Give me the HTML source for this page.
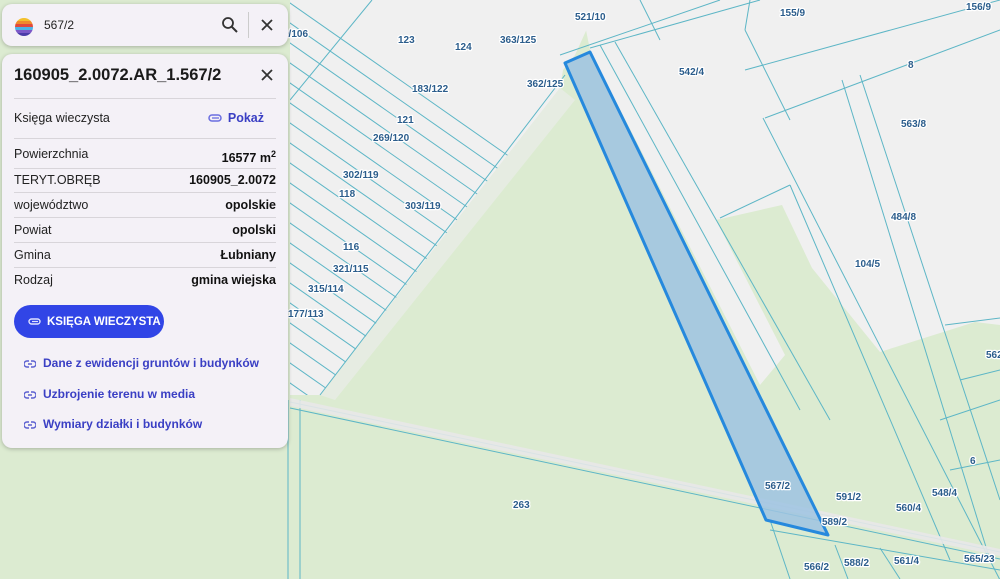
<!DOCTYPE html>
<html><head><meta charset="utf-8"><style>
*{margin:0;padding:0;box-sizing:border-box}
body{width:1000px;height:579px;overflow:hidden;position:relative;font-family:"Liberation Sans",sans-serif;background:#dcebd1}
svg.map{position:absolute;left:0;top:0}
.lbl{font:bold 10px "Liberation Sans",sans-serif;fill:#2b5d8c;paint-order:stroke;stroke:#fff;stroke-width:2.5px;stroke-linejoin:round}
.card{position:absolute;left:2px;background:#f4f1f7;border-radius:10px;box-shadow:0 1px 4px rgba(0,0,0,.25)}
.row{position:absolute;left:12px;width:262px;font-size:12.5px;color:#222;border-bottom:1px solid #d8d5da;height:25px;line-height:25px}
.row b{position:absolute;right:0;top:0;color:#111}
.lnk{position:absolute;left:22px;font-size:12px;font-weight:bold;color:#3a3fc4;white-space:nowrap}
.lnk svg{vertical-align:-1px;margin-right:7px}
</style></head><body>
<svg class="map" width="1000" height="579" viewBox="0 0 1000 579">
<defs>
<clipPath id="lg"><polygon points="290,0 600,0 575,55 563,70 560,88 320,395 290,395"/></clipPath>
</defs>
<polygon points="290,0 600,0 575,55 563,70 560,88 320,395 290,395" fill="#f0f0f0"/>
<polygon points="580,0 1000,0 1000,325 975,322 880,352 812,268 782,205 716,220 785,355 760,385 590,50" fill="#f0f0f0"/>
<polygon points="320,395 560,88 575,100 335,400" fill="#e6ece2"/>
<g clip-path="url(#lg)" stroke="#5db6c6" stroke-width="1" fill="none">
<line x1="200" y1="-60" x2="800" y2="360"/><line x1="200" y1="-40" x2="800" y2="380"/><line x1="200" y1="-20" x2="800" y2="400"/><line x1="200" y1="0" x2="800" y2="420"/><line x1="200" y1="20" x2="800" y2="440"/><line x1="200" y1="40" x2="800" y2="460"/><line x1="200" y1="60" x2="800" y2="480"/><line x1="200" y1="80" x2="800" y2="500"/><line x1="200" y1="100" x2="800" y2="520"/><line x1="200" y1="120" x2="800" y2="540"/><line x1="200" y1="140" x2="800" y2="560"/><line x1="200" y1="160" x2="800" y2="580"/><line x1="200" y1="180" x2="800" y2="600"/><line x1="200" y1="200" x2="800" y2="620"/><line x1="200" y1="220" x2="800" y2="640"/><line x1="200" y1="240" x2="800" y2="660"/><line x1="200" y1="260" x2="800" y2="680"/><line x1="200" y1="280" x2="800" y2="700"/><line x1="200" y1="300" x2="800" y2="720"/><line x1="200" y1="320" x2="800" y2="740"/><line x1="200" y1="340" x2="800" y2="760"/><line x1="200" y1="360" x2="800" y2="780"/>
<line x1="290" y1="100" x2="372" y2="0"/>
</g>
<g stroke="#5db6c6" stroke-width="1" fill="none">
<line x1="320" y1="395" x2="565" y2="75"/>
<line x1="600" y1="45" x2="800" y2="410"/><line x1="615" y1="42" x2="830" y2="420"/><line x1="640" y1="0" x2="660" y2="40"/>
<line x1="560" y1="55" x2="720" y2="0"/><line x1="590" y1="48" x2="760" y2="0"/>
<line x1="750" y1="0" x2="745" y2="30"/><line x1="745" y1="30" x2="790" y2="120"/>
<line x1="745" y1="70" x2="1000" y2="0"/><line x1="765" y1="118" x2="1000" y2="30"/>
<line x1="763" y1="118" x2="1000" y2="580"/><line x1="842" y1="80" x2="990" y2="560"/><line x1="860" y1="75" x2="1000" y2="500"/>
<line x1="720" y1="218" x2="790" y2="185"/><line x1="790" y1="185" x2="950" y2="560"/>
<line x1="290" y1="402" x2="1000" y2="552"/><line x1="290" y1="408" x2="1000" y2="559"/>
<line x1="300" y1="400" x2="300" y2="579"/><line x1="288" y1="400" x2="288" y2="579"/>
<line x1="770" y1="520" x2="790" y2="579"/><line x1="770" y1="530" x2="1000" y2="570"/>
<line x1="835" y1="545" x2="848" y2="579"/><line x1="880" y1="548" x2="900" y2="579"/>
<line x1="945" y1="325" x2="1000" y2="318"/><line x1="960" y1="380" x2="1000" y2="370"/><line x1="940" y1="420" x2="1000" y2="400"/><line x1="950" y1="470" x2="1000" y2="460"/>
</g>
<polygon points="290,398 1000,549 1000,556 290,406" fill="#e8e8e8" opacity=".9"/>
<polygon points="565,63 590,52 828,535 766,520" fill="#9ec3e2" fill-opacity=".85" stroke="#2689dd" stroke-width="3" stroke-linejoin="round"/>
<g class="lbl">
<text x="283" y="37">9/106</text><text x="398" y="43">123</text><text x="455" y="50">124</text><text x="500" y="43">363/125</text>
<text x="575" y="20">521/10</text><text x="780" y="16">155/9</text><text x="966" y="10">156/9</text>
<text x="412" y="92">183/122</text><text x="527" y="87">362/125</text><text x="679" y="75">542/4</text><text x="908" y="68">8</text>
<text x="397" y="123">121</text><text x="373" y="141">269/120</text><text x="901" y="127">563/8</text>
<text x="343" y="178">302/119</text><text x="339" y="197">118</text><text x="405" y="209">303/119</text>
<text x="891" y="220">484/8</text><text x="343" y="250">116</text><text x="855" y="267">104/5</text>
<text x="333" y="272">321/115</text><text x="308" y="292">315/114</text><text x="288" y="317">177/113</text>
<text x="986" y="358">562</text><text x="970" y="464">6</text><text x="932" y="496">548/4</text>
<text x="765" y="489">567/2</text><text x="836" y="500">591/2</text><text x="896" y="511">560/4</text>
<text x="513" y="508">263</text><text x="822" y="525">589/2</text>
<text x="964" y="562">565/23</text><text x="804" y="570">566/2</text><text x="844" y="566">588/2</text><text x="894" y="564">561/4</text>
</g>
</svg>

<div class="card" style="top:4px;width:286px;height:42px">
<svg style="position:absolute;left:12px;top:13px" width="20" height="20" viewBox="0 0 20 20"><clipPath id="c"><circle cx="10" cy="10" r="9"/></clipPath><g clip-path="url(#c)"><rect y="0" width="20" height="4" fill="#f3c02c"/><rect y="4" width="20" height="3" fill="#f08a2c"/><rect y="7" width="20" height="3" fill="#e14a3c"/><rect y="10" width="20" height="3" fill="#4db3e6"/><rect y="13" width="20" height="3" fill="#7b58c8"/><rect y="16" width="20" height="4" fill="#4a3ca8"/></g></svg>
<span style="position:absolute;left:42px;top:14px;font-size:12px;color:#222">567/2</span>
<svg style="position:absolute;left:219px;top:12px" width="18" height="18" viewBox="0 0 18 18"><circle cx="7" cy="7" r="5" fill="none" stroke="#333" stroke-width="1.8"/><line x1="11" y1="11" x2="16" y2="16" stroke="#333" stroke-width="2"/></svg>
<div style="position:absolute;left:246px;top:8px;width:1px;height:26px;background:#ccc"></div>
<svg style="position:absolute;left:258px;top:14px" width="14" height="14" viewBox="0 0 14 14"><path d="M2 2L12 12M12 2L2 12" stroke="#333" stroke-width="1.8"/></svg>
</div>

<div class="card" style="top:54px;width:286px;height:394px">
<div style="position:absolute;left:12px;top:12px;font-size:16.5px;font-weight:bold;color:#1a1a1a">160905_2.0072.AR_1.567/2</div>
<svg style="position:absolute;left:258px;top:14px" width="14" height="14" viewBox="0 0 14 14"><path d="M2 2L12 12M12 2L2 12" stroke="#333" stroke-width="1.8"/></svg>
<div style="position:absolute;left:12px;top:44px;width:262px;height:1px;background:#d8d5da"></div>
<div class="row" style="top:52px;height:33px;line-height:25px">Księga wieczysta<span style="position:absolute;right:12px;top:0;color:#3a3fc4;font-weight:bold"><svg width="14" height="8" viewBox="0 0 14 8" style="margin-right:6px"><rect x="1" y="1" width="12" height="6" rx="3" fill="none" stroke="#6a6ee0" stroke-width="1.5"/><line x1="4" y1="4" x2="11" y2="4" stroke="#6a6ee0" stroke-width="1.3"/></svg>Pokaż</span></div>
<div class="row" style="top:88px;height:27px">Powierzchnia<b>16577 m<sup style="font-size:9px">2</sup></b></div>
<div class="row" style="top:114px">TERYT.OBRĘB<b>160905_2.0072</b></div>
<div class="row" style="top:139px">województwo<b>opolskie</b></div>
<div class="row" style="top:164px">Powiat<b>opolski</b></div>
<div class="row" style="top:189px">Gmina<b>Łubniany</b></div>
<div class="row" style="top:214px;border:none">Rodzaj<b>gmina wiejska</b></div>
<div style="position:absolute;left:12px;top:251px;width:150px;height:33px;border-radius:17px;background:#3145e6;color:#fff;font-size:11.5px;font-weight:bold;display:flex;align-items:center;padding-left:14px;white-space:nowrap"><svg style="margin-right:6px" width="13" height="7" viewBox="0 0 13 7"><rect x="1" y="1" width="11" height="5" rx="2.5" fill="none" stroke="#dfe2ff" stroke-width="1.4"/><line x1="4" y1="3.5" x2="10" y2="3.5" stroke="#dfe2ff" stroke-width="1.2"/></svg>KSIĘGA WIECZYSTA</div>
<div class="lnk" style="top:302px"><svg width="12" height="8" viewBox="0 0 12 8"><path d="M5 1H3a3 3 0 0 0 0 6h2M7 1h2a3 3 0 0 1 0 6H7M4 4h4" fill="none" stroke="#5a5fd0" stroke-width="1.4"/></svg>Dane z ewidencji gruntów i budynków</div>
<div class="lnk" style="top:333px"><svg width="12" height="8" viewBox="0 0 12 8"><path d="M5 1H3a3 3 0 0 0 0 6h2M7 1h2a3 3 0 0 1 0 6H7M4 4h4" fill="none" stroke="#5a5fd0" stroke-width="1.4"/></svg>Uzbrojenie terenu w media</div>
<div class="lnk" style="top:363px"><svg width="12" height="8" viewBox="0 0 12 8"><path d="M5 1H3a3 3 0 0 0 0 6h2M7 1h2a3 3 0 0 1 0 6H7M4 4h4" fill="none" stroke="#5a5fd0" stroke-width="1.4"/></svg>Wymiary działki i budynków</div>
</div>
</body></html>
